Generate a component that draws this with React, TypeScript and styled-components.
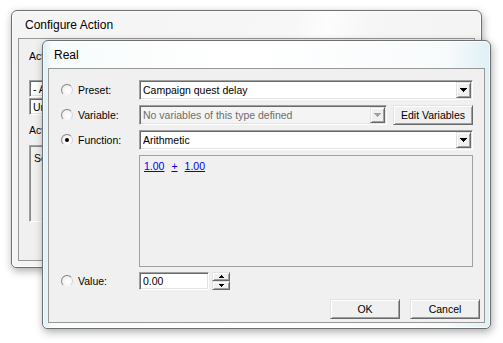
import React from 'react';
import styled, { createGlobalStyle } from 'styled-components';

const GlobalStyle = createGlobalStyle`
  html, body {
    margin: 0;
    padding: 0;
    background: #ffffff;
  }
  body {
    font-family: 'Liberation Sans', Arial, sans-serif;
    font-size: 10.5px;
    color: #000000;
  }
`;

const Desktop = styled.div`
  position: relative;
  width: 503px;
  height: 343px;
  overflow: hidden;
  background: #ffffff;
`;

// windows sit on a free canvas, so they are placed by coordinates
const Window = styled.div<{ $x: number; $y: number; $w: number; $h: number; $front?: boolean }>`
  position: absolute;
  left: ${(p) => p.$x}px;
  top: ${(p) => p.$y}px;
  width: ${(p) => p.$w}px;
  height: ${(p) => p.$h}px;
  box-sizing: border-box;
  display: flex;
  flex-direction: column;
  padding: 0 ${(p) => (p.$front ? 5 : 6)}px ${(p) => (p.$front ? 5 : 6)}px;
  border: 1px solid #6f6f6f;
  border-radius: 6px 6px 5px 5px;
  background: ${(p) =>
    p.$front
      ? 'linear-gradient(90deg, #dbeff5 0, #e8f5f8 5px, #f8fcfc 9px, #ffffff 45%, #f8fbfc 90%, #dff0f5 100%)'
      : 'linear-gradient(100deg, #f4f4f4 0%, #f7f7f7 55%, #fdfdfd 62%, #f6f6f6 70%, #f3f3f3 100%)'};
  box-shadow: inset 0 0 0 1px rgba(255, 255, 255, 0.75), 1px 3px 9px rgba(0, 0, 0, 0.33);
`;

const TitleBar = styled.div<{ $indent: number }>`
  height: 27px;
  flex: none;
  display: flex;
  align-items: center;
  padding-left: ${(p) => p.$indent}px;
  font-size: 12px;
  color: #000000;
  text-shadow: 0 0 6px #ffffff, 0 0 10px #ffffff;
`;

const Client = styled.div<{ $front?: boolean }>`
  flex: 1;
  min-height: 0;
  box-sizing: border-box;
  border: 1px solid #979797;
  background: #f0f0f0;
  display: flex;
  flex-direction: column;
  padding: ${(p) => (p.$front ? '11px 4px 0 12px' : '11px 10px 0 10px')};
`;

/* ---------- classic controls ---------- */

const Sunken = styled.div<{ $h: number; $disabled?: boolean }>`
  box-sizing: border-box;
  height: ${(p) => p.$h}px;
  display: flex;
  align-items: center;
  min-width: 0;
  border: 1px solid;
  border-color: #a0a0a0 #ffffff #ffffff #a0a0a0;
  box-shadow: inset 1px 1px 0 #696969, inset -1px -1px 0 #e3e3e3;
  background: ${(p) => (p.$disabled ? '#f4f4f4' : '#ffffff')};
  color: ${(p) => (p.$disabled ? '#6d6d6d' : '#000000')};
  padding: 2px 2px 2px 3px;
  white-space: nowrap;
  overflow: hidden;
`;

const FieldText = styled.span`
  flex: 1;
  overflow: hidden;
`;

const Raised = styled.div<{ $w?: number; $h?: number }>`
  box-sizing: border-box;
  width: ${(p) => (p.$w ? `${p.$w}px` : 'auto')};
  height: ${(p) => (p.$h ? `${p.$h}px` : '100%')};
  flex: none;
  display: flex;
  align-items: center;
  justify-content: center;
  background: #f0f0f0;
  border: 1px solid;
  border-color: #e3e3e3 #696969 #696969 #e3e3e3;
  box-shadow: inset 1px 1px 0 #ffffff, inset -1px -1px 0 #a0a0a0;
  color: #000000;
  font-size: 10.5px;
`;

const ArrowSvg = ({ up, disabled, small }: { up?: boolean; disabled?: boolean; small?: boolean }) => {
  const fill = disabled ? '#a0a0a0' : '#000000';
  if (small) {
    return (
      <svg width="5" height="3" viewBox="0 0 5 3" shapeRendering="crispEdges" style={{ transform: up ? 'scaleY(-1)' : undefined }}>
        <path d="M0 0h5v1H0z M1 1h3v1H1z M2 2h1v1H2z" fill={fill} />
      </svg>
    );
  }
  return (
    <svg width="7" height="4" viewBox="0 0 7 4" shapeRendering="crispEdges">
      <path d="M0 0h7v1H0z M1 1h5v1H1z M2 2h3v1H2z M3 3h1v1H3z" fill={fill} />
    </svg>
  );
};

const ComboButton = styled(Raised)`
  width: 15px;
  height: 16px;
  margin-right: -1px;
`;

const Combo = ({ text, disabled, h = 20, arrow = true }: { text: string; disabled?: boolean; h?: number; arrow?: boolean }) => (
  <Sunken $h={h} $disabled={disabled}>
    <FieldText>{text}</FieldText>
    {arrow && (
      <ComboButton>
        <ArrowSvg disabled={disabled} />
      </ComboButton>
    )}
  </Sunken>
);

const Radio = styled.span<{ $checked?: boolean }>`
  box-sizing: border-box;
  width: 12px;
  height: 12px;
  flex: none;
  border-radius: 50%;
  border: 1px solid;
  border-color: #7e7e7e #d6d6d6 #f2f2f2 #8a8a8a;
  background: radial-gradient(circle at 60% 60%, #ffffff 0, #f5f5f5 55%, #dedede 100%);
  display: flex;
  align-items: center;
  justify-content: center;

  &::after {
    content: '';
    display: ${(p) => (p.$checked ? 'block' : 'none')};
    width: 4px;
    height: 4px;
    border-radius: 50%;
    background: #000000;
  }
`;

/* ---------- front dialog ---------- */

const FormGrid = styled.div`
  display: grid;
  grid-template-columns: 78px 1fr;
  grid-template-rows: 20px 20px 20px 112px 18px;
  row-gap: 5px;
  margin-right: 7px;
`;

const Choice = styled.label`
  display: flex;
  align-items: center;
  gap: 5px;
  align-self: center;
`;

const VariableRow = styled.div`
  display: grid;
  grid-template-columns: 1fr 80px;
  column-gap: 6px;
`;

const ExpressionPanel = styled.div`
  box-sizing: border-box;
  border: 1px solid #a0a0a0;
  background: #f0f0f0;
  padding: 4px 4px;
  display: flex;
  gap: 7px;
  align-items: flex-start;
`;

const ExprLink = styled.span`
  color: #0000ee;
  text-decoration: underline;
  line-height: 13px;
`;

const ValueRow = styled.div`
  display: flex;
  align-items: stretch;
  gap: 3px;
`;

const Spinner = styled.div`
  display: flex;
  flex-direction: column;
  width: 18px;
`;

const SpinHalf = styled(Raised)`
  height: 9px;
`;

const Footer = styled.div`
  display: flex;
  justify-content: flex-end;
  gap: 10px;
  margin-top: 9px;
`;

/* ---------- back dialog ---------- */

const BackLabel = styled.div<{ $gap: number }>`
  line-height: 13px;
  margin-bottom: ${(p) => p.$gap}px;
`;

const BackCombos = styled.div`
  display: flex;
  flex-direction: column;
  gap: 1px;
  margin-bottom: 9px;
`;

const ListBox = styled.div`
  box-sizing: border-box;
  height: 77px;
  border: 1px solid;
  border-color: #a0a0a0 #ffffff #ffffff #a0a0a0;
  box-shadow: inset 1px 1px 0 #8a8a8a;
  background: #f0f0f0;
  padding: 6px 4px;
`;

export default function App() {
  return (
    <>
      <GlobalStyle />
      <Desktop>
        <Window $x={11} $y={10} $w={471} $h={258}>
          <TitleBar $indent={7}>Configure Action</TitleBar>
          <Client>
            <BackLabel $gap={17}>Action Type:</BackLabel>
            <BackCombos>
              <Combo text="- All -" h={17} arrow={false} />
              <Combo text="Unit - Create Units" h={17} arrow={false} />
            </BackCombos>
            <BackLabel $gap={8}>Actions:</BackLabel>
            <ListBox>Set Variable</ListBox>
          </Client>
        </Window>

        <Window $x={42} $y={40} $w={449} $h={289} $front>
          <TitleBar $indent={6}>Real</TitleBar>
          <Client $front>
            <FormGrid>
              <Choice>
                <Radio />
                Preset:
              </Choice>
              <Combo text="Campaign quest delay" />

              <Choice>
                <Radio />
                Variable:
              </Choice>
              <VariableRow>
                <Combo text="No variables of this type defined" disabled />
                <Raised>Edit Variables</Raised>
              </VariableRow>

              <Choice>
                <Radio $checked />
                Function:
              </Choice>
              <Combo text="Arithmetic" />

              <div />
              <ExpressionPanel>
                <ExprLink>1.00</ExprLink>
                <ExprLink>+</ExprLink>
                <ExprLink>1.00</ExprLink>
              </ExpressionPanel>

              <Choice>
                <Radio />
                Value:
              </Choice>
              <ValueRow>
                <Sunken $h={18} style={{ width: 70 }}>
                  <FieldText>0.00</FieldText>
                </Sunken>
                <Spinner>
                  <SpinHalf>
                    <ArrowSvg up small />
                  </SpinHalf>
                  <SpinHalf>
                    <ArrowSvg small />
                  </SpinHalf>
                </Spinner>
              </ValueRow>
            </FormGrid>
            <Footer>
              <Raised $w={70} $h={20}>OK</Raised>
              <Raised $w={70} $h={20}>Cancel</Raised>
            </Footer>
          </Client>
        </Window>
      </Desktop>
    </>
  );
}
